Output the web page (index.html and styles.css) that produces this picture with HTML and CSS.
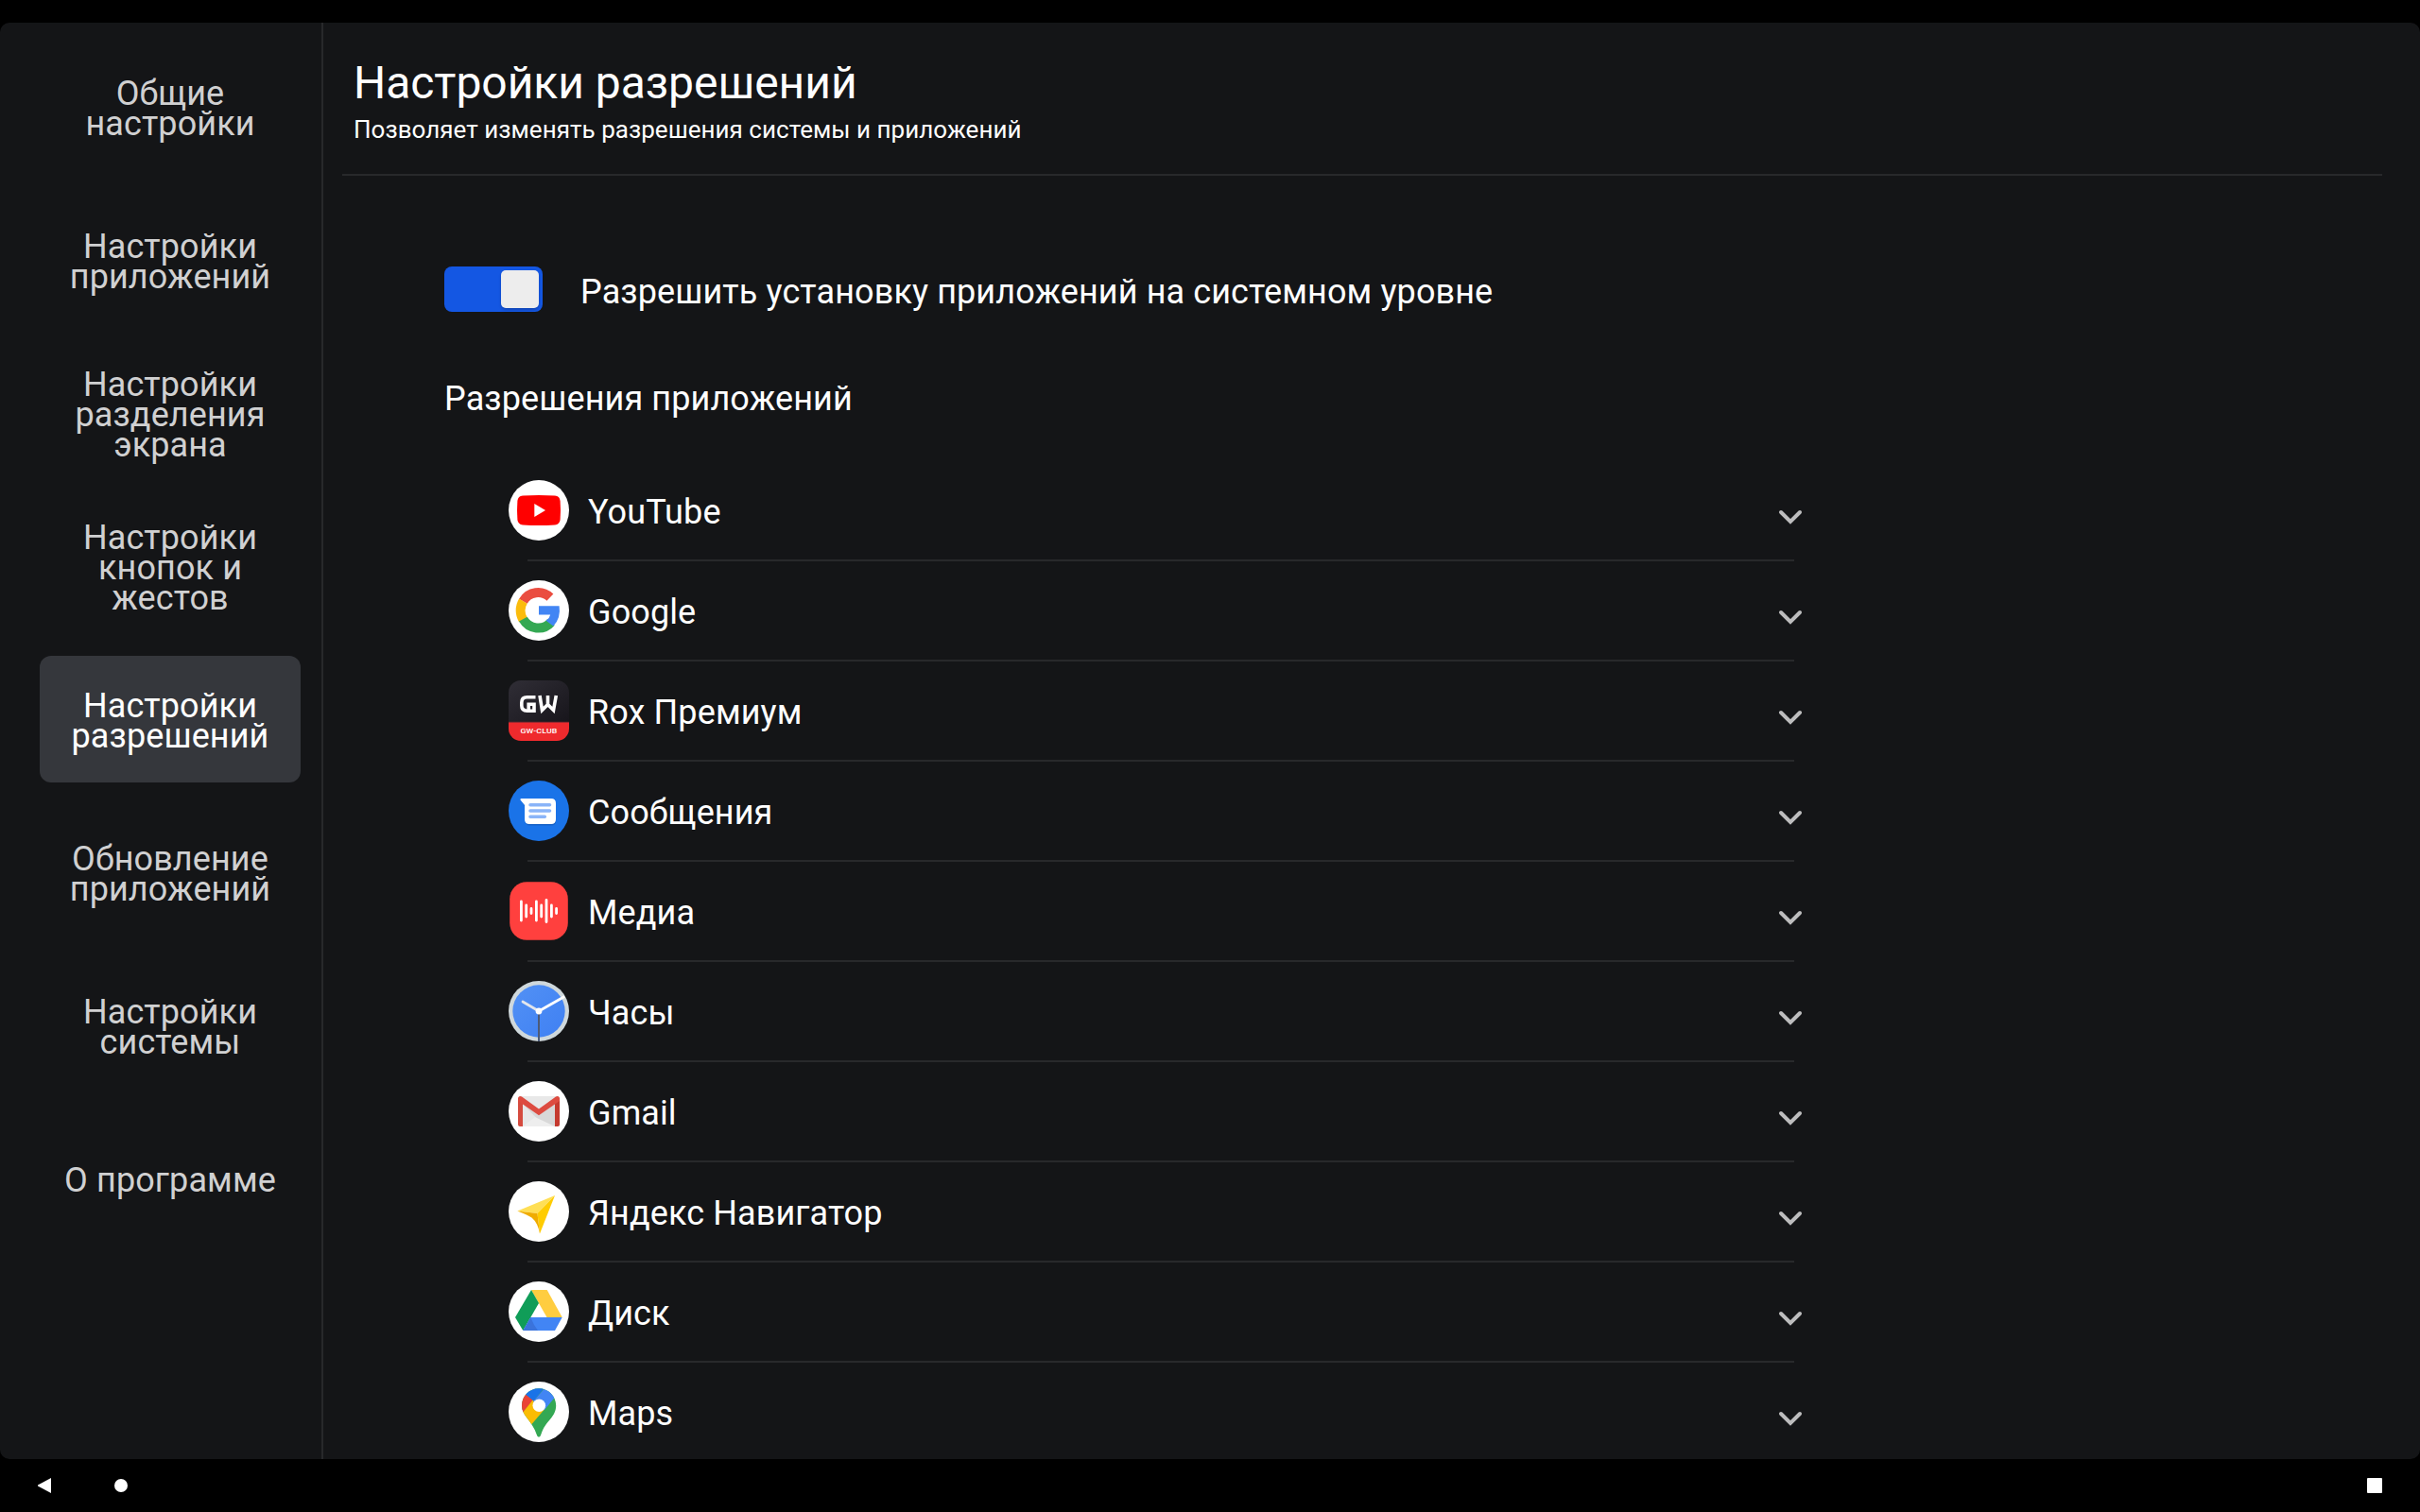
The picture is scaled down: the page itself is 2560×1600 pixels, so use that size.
FILE: index.html
```html
<!DOCTYPE html>
<html lang="ru">
<head>
<meta charset="utf-8">
<title>Настройки разрешений</title>
<link rel="stylesheet" href="styles.css">
</head>
<body>
<div class="screen">
  <div class="app">
    <nav class="sidebar">
      <a class="tab"><span>Общие<br>настройки</span></a>
      <a class="tab"><span>Настройки<br>приложений</span></a>
      <a class="tab"><span>Настройки<br>разделения<br>экрана</span></a>
      <a class="tab"><span>Настройки<br>кнопок и<br>жестов</span></a>
      <a class="tab active"><span>Настройки<br>разрешений</span></a>
      <a class="tab"><span>Обновление<br>приложений</span></a>
      <a class="tab"><span>Настройки<br>системы</span></a>
      <a class="tab"><span>О программе</span></a>
    </nav>
    <main class="content">
      <header class="header">
        <h1>Настройки разрешений</h1>
        <p>Позволяет изменять разрешения системы и приложений</p>
      </header>
      <label class="switch-row">
        <span class="switch"><span class="thumb"></span></span>
        <span class="switch-label">Разрешить установку приложений на системном уровне</span>
      </label>
      <h2>Разрешения приложений</h2>
      <ul class="apps">
        <li class="row">
          <svg class="icon" viewBox="0 0 64 64"><circle cx="32" cy="32" r="32" fill="#fff"/><path d="M15 16.6Q32 15.4 49 16.6Q54 17 54.6 22Q55.4 32 54.6 42Q54 47 49 47.4Q32 48.6 15 47.4Q10 47 9.4 42Q8.6 32 9.4 22Q10 17 15 16.6Z" fill="#f00"/><path d="M27.3 25L39 32L27.3 39Z" fill="#fff"/></svg>
          <span class="name">YouTube</span>
          <svg class="chevron" viewBox="0 0 24 14"><path d="M2 2L12 12L22 2"/></svg>
        </li>
        <li class="row">
          <svg class="icon" viewBox="0 0 64 64"><circle cx="32" cy="32" r="32" fill="#fff"/><g fill="none" stroke-width="10"><path d="M15.4 22.2A18.2 18.2 0 0 1 43.9 18.2" stroke="#ea4d40"/><path d="M15.4 41.8A19 19 0 0 1 15.4 22.2" stroke="#fbbc0c"/><path d="M45 44.4A18.2 18.2 0 0 1 15.4 41.2" stroke="#34a853"/></g><path d="M32 27.3H53.6Q55.6 40 47.3 48.6L39.6 42.8Q43.2 40.4 44.2 36.4H32Z" fill="#4285f4"/></svg>
          <span class="name">Google</span>
          <svg class="chevron" viewBox="0 0 24 14"><path d="M2 2L12 12L22 2"/></svg>
        </li>
        <li class="row">
          <svg class="icon" viewBox="0 0 64 64"><defs><clipPath id="gw"><rect width="64" height="64" rx="13"/></clipPath><linearGradient id="gwd" x1="0" y1="0" x2="1" y2="1"><stop offset="0" stop-color="#302e36"/><stop offset="1" stop-color="#17151b"/></linearGradient></defs><g clip-path="url(#gw)"><rect width="64" height="45" fill="url(#gwd)"/><rect y="44" width="64" height="20" fill="#ef2a2d"/><path d="M0 44.3H64" stroke="#8d2930"/></g><g fill="none" stroke="#fff" stroke-width="3.6"><path d="M28.5 17.8H19.5Q13.8 17.8 13.8 23.4V26.6Q13.8 32.2 19.5 32.2H27V25.3H21.2V31.5"/><path d="M33 16L35.5 31.5L41.5 25.5L47.5 31.5L50.3 16M41.5 16V27"/></g><text x="32" y="56" text-anchor="middle" textLength="39" lengthAdjust="spacingAndGlyphs" class="club">GW-CLUB</text></svg>
          <span class="name">Rox Премиум</span>
          <svg class="chevron" viewBox="0 0 24 14"><path d="M2 2L12 12L22 2"/></svg>
        </li>
        <li class="row">
          <svg class="icon" viewBox="0 0 64 64"><circle cx="32" cy="32" r="32" fill="#1a73e8"/><path d="M14 21.5L18 29V42Q18 47.5 22 47.5H45Q50 47.5 50 43V24Z" fill="#1762c6"/><path d="M13.4 19H45Q50 19 50 24V41Q50 46 45 46H22Q17 46 17 41V26L12.5 20.6Q12 19 13.4 19Z" fill="#fff"/><path d="M23 25.7H43.5M23 32H43.5M23 38.2H38.3" stroke="#8ab4f8" stroke-width="3.6" stroke-linecap="round"/></svg>
          <span class="name">Сообщения</span>
          <svg class="chevron" viewBox="0 0 24 14"><path d="M2 2L12 12L22 2"/></svg>
        </li>
        <li class="row">
          <svg class="icon" viewBox="0 0 64 64"><rect x="1.2" y="1.2" width="61.6" height="61.6" rx="18" fill="#ff403e"/><path d="M13.4 22V42M18.7 26V38M24 29.5V34.5M29.4 22V42M34.7 26V38M40 20.5V43.5M45.4 26V38M50.6 29.5V34.5" stroke="#fff" stroke-width="2.8" stroke-linecap="round"/></svg>
          <span class="name">Медиа</span>
          <svg class="chevron" viewBox="0 0 24 14"><path d="M2 2L12 12L22 2"/></svg>
        </li>
        <li class="row">
          <svg class="icon" viewBox="0 0 64 64"><defs><linearGradient id="clk" x1="0" y1="0" x2="1" y2="1"><stop offset="0" stop-color="#5291f5"/><stop offset="1" stop-color="#3f80f3"/></linearGradient></defs><circle cx="32" cy="32" r="32" fill="#cfd8dc"/><circle cx="32" cy="32" r="27.7" fill="url(#clk)"/><path d="M32 32V64" stroke="#4d5b78" stroke-width="2"/><path d="M32 32L15 22" stroke="#e2e6ec" stroke-width="2.8" stroke-linecap="round"/><path d="M32 32L59.2 16.5" stroke="#fff" stroke-width="2.8"/><circle cx="32" cy="32" r="3.4" fill="#fff"/></svg>
          <span class="name">Часы</span>
          <svg class="chevron" viewBox="0 0 24 14"><path d="M2 2L12 12L22 2"/></svg>
        </li>
        <li class="row">
          <svg class="icon" viewBox="0 0 64 64"><circle cx="32" cy="32" r="32" fill="#fff"/><rect x="11" y="16" width="42" height="32" fill="#e8e8e8"/><path d="M15 24L32 36L49 24V48H38Z" fill="#d8d8d8"/><path d="M15 48L28 38L32 40L49 48Z" fill="#eee"/><path d="M10 19H15V48H12Q10 48 10 46Z" fill="#d54b3f"/><path d="M49 19H54V46Q54 48 52 48H49Z" fill="#c53a2f"/><path d="M10 18.5Q10 16 12.5 16L14 16.4L32 29.5L50 16.4L51.5 16Q54 16 54 18.5V21L32 36.2L10 21Z" fill="#dd4b40"/></svg>
          <span class="name">Gmail</span>
          <svg class="chevron" viewBox="0 0 24 14"><path d="M2 2L12 12L22 2"/></svg>
        </li>
        <li class="row">
          <svg class="icon" viewBox="0 0 64 64"><circle cx="32" cy="32" r="32" fill="#fff"/><path d="M9.3 31.5L49 15L30.5 34Z" fill="#ffdf55"/><path d="M49 15L33 55.5L30.5 34Z" fill="#fc0"/><path d="M9.3 31.5L30.5 34L33 55.5Q31 44 24.5 38.5Q21 36 9.3 31.5Z" fill="#f0ac00"/></svg>
          <span class="name">Яндекс Навигатор</span>
          <svg class="chevron" viewBox="0 0 24 14"><path d="M2 2L12 12L22 2"/></svg>
        </li>
        <li class="row">
          <svg class="icon" viewBox="0 0 64 64"><circle cx="32" cy="32" r="32" fill="#fff"/><path d="M24 9H40.7L56.7 38H40.5Z" fill="#ffcd40"/><path d="M24 9L32 23L15.3 52L7 38Z" fill="#109d58"/><path d="M23.3 38H56.7L49 52H15.3Z" fill="#4285f4"/><path d="M23.3 38L27 46L31 52H15.3Z" fill="#3a73dc"/></svg>
          <span class="name">Диск</span>
          <svg class="chevron" viewBox="0 0 24 14"><path d="M2 2L12 12L22 2"/></svg>
        </li>
        <li class="row">
          <svg class="icon" viewBox="0 0 64 64"><defs><clipPath id="pin"><path d="M32 7.2C42 7.2 50.2 15.3 50.2 25.3C50.2 31 48 35 44.5 39.3C40 44.7 37 48 34.3 56Q33.6 58.8 32 58.8Q30.4 58.8 29.7 56C27.5 49 24 44.5 19.5 38.5C16 34 14 30.5 14 25.3C14 15.3 22 7.2 32 7.2Z"/></clipPath></defs><circle cx="32" cy="32" r="32" fill="#fff"/><g clip-path="url(#pin)"><rect width="64" height="64" fill="#34a853"/><path d="M0 8L18 13L26 19.5L10 39L0 44Z" fill="#ea4335"/><path d="M26 19L10 39L24.5 45L40 27Z" fill="#fbbc04"/><path d="M18 13.5L26.5 20.5L40 4L20 0Z" fill="#1a73e8"/><path d="M38.5 6.5L26 21L38 30L49.5 16Z" fill="#4285f4"/></g><circle cx="32.3" cy="25.3" r="6.8" fill="#fff"/></svg>
          <span class="name">Maps</span>
          <svg class="chevron" viewBox="0 0 24 14"><path d="M2 2L12 12L22 2"/></svg>
        </li>
      </ul>
    </main>
  </div>
  <footer class="navbar">
    <svg class="back" viewBox="0 0 14 16"><path d="M14 0V16L0 8.6V7.4Z"/></svg>
    <span class="home"></span>
    <span class="recents"></span>
  </footer>
</div>
</body>
</html>
```
FILE: styles.css
```css
* { box-sizing: border-box; }
body {
  margin: 0;
  background: #000;
  color: #fff;
  font-family: Roboto, "Noto Sans", sans-serif;
  font-size: 36px;
  letter-spacing: 0.11px;
}
.screen {
  width: 2560px;
  height: 1600px;
  padding-top: 24px;
  overflow: hidden;
  display: flex;
  flex-direction: column;
}
.app {
  height: 1520px;
  display: flex;
  background: #141517;
  border-radius: 10px;
  overflow: hidden;
}
.sidebar {
  width: 342px;
  flex: none;
  border-right: 2px solid #28292b;
  padding: 22px 22px 0 42px;
  display: flex;
  flex-direction: column;
  gap: 28px;
}
.tab {
  height: 134px;
  flex: none;
  display: flex;
  align-items: center;
  justify-content: center;
  border-radius: 12px;
  color: #d0d0d1;
  line-height: 32px;
  text-align: center;
  padding-top: 4px;
}
.tab.active { background: #35373c; color: #fff; }
.content { flex: 1; padding: 0 40px 0 20px; }
.header {
  height: 162px;
  border-bottom: 2px solid #28292b;
  padding: 36px 0 0 12px;
}
h1, h2, p, ul { margin: 0; padding: 0; font-weight: 400; }
h1 { font-size: 48px; line-height: 56px; letter-spacing: -0.04px; }
.header p { font-size: 26px; line-height: 32px; margin-top: 5px; letter-spacing: 0.03px; }
.switch-row { display: flex; align-items: center; gap: 40px; margin: 96px 0 0 108px; height: 48px; }
.switch {
  width: 104px;
  height: 48px;
  padding: 4px;
  border-radius: 8px;
  background: #1457e3;
  display: flex;
  justify-content: flex-end;
}
.thumb { width: 40px; height: 40px; border-radius: 5px; background: #ededed; box-shadow: 0 2px 3px rgba(0,0,0,.2); }
.switch-label { line-height: 42px; padding-top: 6px; }
h2 { font-size: 36px; line-height: 42px; margin: 71px 0 0 108px; }
.apps { list-style: none; margin: 45px 0 0 176px; width: 1368px; }
.row {
  height: 106px;
  display: grid;
  grid-template-columns: 64px 1fr 24px;
  column-gap: 20px;
  align-items: start;
  padding-top: 20px;
  background: linear-gradient(#28292b, #28292b) 20px 104px / 1340px 2px no-repeat;
}
.row:last-child { background: none; }
.icon { width: 64px; height: 64px; display: block; }
.club { font: 500 7px Roboto, sans-serif; fill: #fff; }
.name { line-height: 42px; padding-top: 13px; }
.chevron { width: 24px; height: 14px; margin-top: 32px; fill: none; stroke: #bdbdbe; stroke-width: 4; stroke-linecap: round; overflow: visible; }
.navbar { height: 56px; display: flex; align-items: center; padding: 0 40px; }
.back { width: 14px; height: 16px; fill: #fff; }
.home { width: 14px; height: 14px; border-radius: 50%; background: #fff; margin-left: 67px; }
.recents { width: 16px; height: 16px; border-radius: 1px; background: #fff; margin-left: auto; }
```
